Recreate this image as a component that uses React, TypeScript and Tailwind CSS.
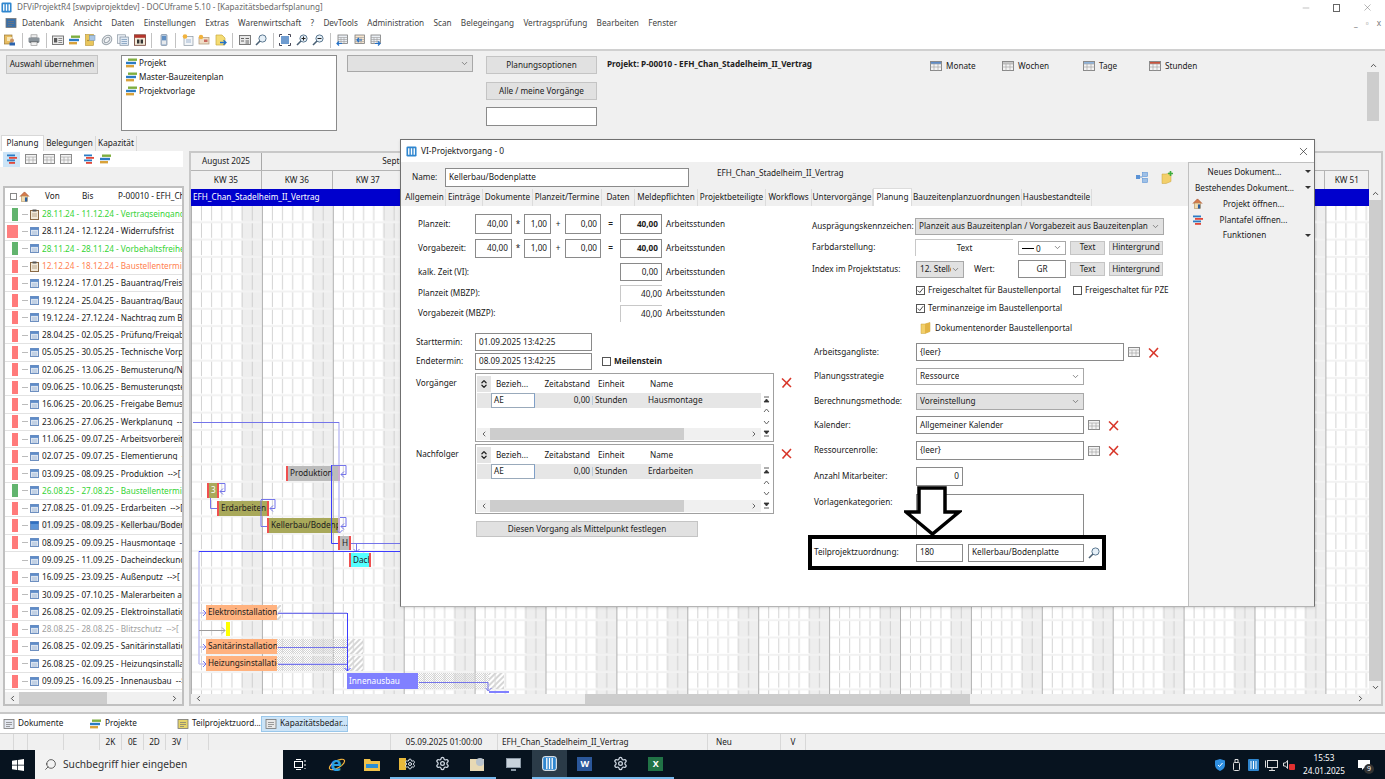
import React from 'react';
import { ChevronDown, ChevronLeft, ChevronRight, ChevronUp, Settings, Search, Minus, X, ChevronsUpDown } from 'lucide-react';

// small toolbar / tree glyphs
const CalIcon = ({ dark }: { dark?: boolean }) => (
  <svg width="9" height="9" viewBox="0 0 9 9" className="shrink-0">
    <rect x="0.5" y="0.5" width="8" height="8" fill={dark ? '#5b93d6' : '#dbe4f0'} stroke="#6d8fc0" />
    <rect x="0.5" y="0.5" width="8" height="2.4" fill={dark ? '#2f6fc0' : '#5f8cc8'} />
    {!dark && <path d="M2 5h5M2 7h5" stroke="#9db3d2" strokeWidth="0.8" />}
  </svg>
);

const ClipIcon = () => (
  <svg width="9" height="11" viewBox="0 0 9 11" className="shrink-0">
    <rect x="0.5" y="1.5" width="8" height="9" fill="#f3ead9" stroke="#8a6a45" />
    <rect x="2.5" y="0.5" width="4" height="2" fill="#555" />
    <path d="M2 5h5M2 7h5" stroke="#a08a6a" strokeWidth="0.7" />
  </svg>
);

const BarsIcon = () => (
  <svg width="11" height="10" viewBox="0 0 11 10" className="shrink-0">
    <rect x="2" y="0.5" width="9" height="2.4" fill="#7fae3f" />
    <rect x="0" y="3.8" width="10" height="2.4" fill="#2b7bc4" />
    <rect x="0" y="7" width="8" height="2.4" fill="#d9a23a" />
  </svg>
);

const RedBars = () => (
  <svg width="11" height="10" viewBox="0 0 11 10" className="shrink-0">
    <rect x="1" y="0.5" width="8" height="1.8" fill="#2b7bc4" />
    <rect x="3" y="3" width="8" height="1.8" fill="#e0483a" />
    <rect x="1" y="5.5" width="8" height="1.8" fill="#2b7bc4" />
    <rect x="3" y="8" width="6" height="1.8" fill="#e0483a" />
  </svg>
);

const House = ({ size = 11 }: { size?: number }) => (
  <svg width={size} height={size} viewBox="0 0 12 12" className="shrink-0">
    <path d="M1 6l5-5 5 5" fill="#d67a4a" stroke="#a8502a" strokeWidth="0.8" />
    <rect x="2.5" y="5.5" width="7" height="6" fill="#f2dcb0" stroke="#a88a5a" strokeWidth="0.6" />
    <rect x="6.5" y="7" width="2.5" height="4.5" fill="#2c5f9e" />
  </svg>
);

const AppLogo = ({ size = 12 }: { size?: number }) => (
  <svg width={size} height={size} viewBox="0 0 12 12" className="shrink-0">
    <rect x="0.5" y="0.5" width="11" height="11" rx="1.5" fill="#2f86cf" />
    <path d="M3 2.5v7M6 2.5v7M9 2.5v7" stroke="#fff" strokeWidth="1.5" />
  </svg>
);

const RedX = () => (
  <svg width="11" height="11" viewBox="0 0 11 11" className="shrink-0">
    <path d="M1 1.5l9 8.5M10 1l-8.5 9.5" stroke="#d8372a" strokeWidth="1.6" />
  </svg>
);

const TableIcon = ({ head = '#f4f4f4' }: { head?: string }) => (
  <svg width="12" height="10" viewBox="0 0 12 10" className="shrink-0">
    <rect x="0.5" y="0.5" width="11" height="9" fill="#f4f4f4" stroke="#8a8a8a" />
    <rect x="1" y="1" width="10" height="2" fill={head} />
    <path d="M0.5 3h11M0.5 6h11M4 3v6.5M8 3v6.5" stroke="#a8a8a8" strokeWidth="0.7" />
  </svg>
);

const Magnifier = ({ plus, minus }: { plus?: boolean; minus?: boolean }) => (
  <svg width="12" height="12" viewBox="0 0 12 12" className="shrink-0">
    <circle cx="7.5" cy="4.5" r="3.6" fill="#e6f0f8" stroke="#5b7890" />
    <path d="M5 7l-4 4" stroke="#4a6074" strokeWidth="1.6" />
    {plus && <path d="M5.5 4.5h4M7.5 2.5v4" stroke="#222" strokeWidth="1" />}
    {minus && <path d="M5.5 4.5h4" stroke="#222" strokeWidth="1" />}
  </svg>
);

const FolderIcon = () => (
  <svg width="11" height="12" viewBox="0 0 11 12" className="shrink-0">
    <path d="M1 2h4l5-1.5v9L5 11.5H1z" fill="#f2cf6a" stroke="#c9a23f" strokeWidth="0.5" />
    <path d="M5 2l5-1.5v9L5 11.5z" fill="#e2b445" />
  </svg>
);

const TinyDoc = ({ tone }: { tone: string }) => (
  <svg width="12" height="12" viewBox="0 0 12 12" className="shrink-0">
    <rect x="1" y="1.5" width="10" height="9" fill={tone} stroke="#777" strokeWidth="0.8" />
    <path d="M3 4.5h6M3 6.5h6M3 8.5h4" stroke="#777" strokeWidth="0.7" />
  </svg>
);

const Ico = ({ children }: { children: React.ReactNode }) => (
  <svg width="12" height="12" viewBox="0 0 12 12" className="shrink-0">{children}</svg>
);

const CardLines = () => (
  <>
    <rect x="0.5" y="2" width="11" height="8.5" fill="#ececec" stroke="#6e6e6e" strokeWidth="0.9" />
    <rect x="2" y="4" width="3.2" height="4.5" fill="#5a5a5a" />
    <path d="M6.4 4.5h3.8M6.4 6.5h3.8M6.4 8.5h3.8" stroke="#6e6e6e" strokeWidth="0.8" />
  </>
);

const TableBase = ({ tone = '#ecf0f5' }: { tone?: string }) => (
  <>
    <rect x="2" y="1" width="9.5" height="8.5" fill={tone} stroke="#7c7c7c" strokeWidth="0.8" />
    <path d="M2 3.5h9.5M2 5.5h9.5M2 7.5h9.5M5 3.5v6M8 3.5v6" stroke="#9a9a9a" strokeWidth="0.6" />
  </>
);

const Sep = () => <div className="w-px h-[15px] bg-[#c2c2c2] mx-px shrink-0" />;

const ToolBar = () => (
  <div className="h-[20px] bg-white border-b-2 border-[#d0d0d0] flex items-center pl-[4px] gap-[4.5px] shrink-0">
    <Ico>
      <rect x="0.5" y="1" width="7.5" height="9" fill="#e8bd62" stroke="#9c7a34" strokeWidth="0.7" />
      <rect x="3" y="3" width="5" height="4" fill="#f7e7b8" />
      <circle cx="8" cy="6.5" r="2" fill="#c99262" />
      <rect x="5.5" y="8.5" width="5.5" height="3" fill="#2c63ad" />
    </Ico>
    <Sep />
    <Ico>
      <rect x="3" y="0.8" width="6" height="3" fill="#eee" stroke="#888" strokeWidth="0.6" />
      <rect x="0.5" y="3.5" width="11" height="5" rx="1" fill="#8b949b" />
      <rect x="1.5" y="7.5" width="9" height="1.2" fill="#4a5258" />
      <rect x="3" y="8" width="6" height="3.3" fill="#f2f2f2" stroke="#888" strokeWidth="0.6" />
    </Ico>
    <Sep />
    <Ico><CardLines /></Ico>
    <BarsIcon />
    <Ico>
      <rect x="1.5" y="0.5" width="8" height="11" fill="#e9c65c" stroke="#b49334" strokeWidth="0.6" />
      <rect x="5.5" y="1.5" width="5.5" height="5" fill="#a9c5e4" stroke="#6b8db3" strokeWidth="0.5" />
      <circle cx="4" cy="6.5" r="0.7" fill="#8a6a20" />
    </Ico>
    <Ico>
      <ellipse cx="6" cy="6" rx="5.2" ry="4.2" fill="#f1f3f5" stroke="#9aa3ab" transform="rotate(-40 6 6)" />
      <ellipse cx="6" cy="6" rx="3.2" ry="2" fill="none" stroke="#9aa3ab" transform="rotate(-40 6 6)" />
    </Ico>
    <Ico>
      <rect x="0.5" y="0.8" width="8" height="8.5" fill="#edf2f7" stroke="#8a96a2" strokeWidth="0.7" />
      <rect x="3" y="3" width="8.5" height="8.3" fill="#dfe8f2" stroke="#7f8e9e" strokeWidth="0.7" />
      <path d="M4.5 5.5h5.5M4.5 7.5h5.5M4.5 9.5h5.5" stroke="#6f90b5" strokeWidth="0.7" />
    </Ico>
    <Ico>
      <rect x="0.5" y="0.8" width="11" height="10.5" fill="#f3ead8" stroke="#6a3a30" strokeWidth="0.8" />
      <rect x="0.5" y="0.8" width="11" height="3" fill="#b4352c" />
      <rect x="3" y="5.5" width="2.4" height="4" fill="#333" />
      <rect x="6.6" y="5.5" width="2.4" height="4" fill="#333" />
    </Ico>
    <Sep />
    <Ico>
      <rect x="3" y="0.5" width="6" height="11" rx="1" fill="#b5c7db" stroke="#7b8da0" strokeWidth="0.7" />
      <rect x="4" y="2" width="4" height="4" fill="#5f8fc4" />
      <rect x="4" y="7" width="4" height="3" fill="#e6e9ec" />
    </Ico>
    <Sep />
    <Ico>
      <rect x="2" y="2.5" width="9" height="9" fill="#f2f5f8" stroke="#8a96a2" strokeWidth="0.7" />
      <path d="M4 6h5M4 8h5" stroke="#7f9cc0" strokeWidth="0.7" />
      <circle cx="3" cy="2.5" r="2.3" fill="#f2b33d" />
    </Ico>
    <Ico>
      <rect x="1" y="3.5" width="10" height="6.5" fill="#f0ddc6" stroke="#a89274" strokeWidth="0.7" />
      <rect x="6" y="5.5" width="3.5" height="2.5" fill="#c9695c" />
      <circle cx="3" cy="3" r="2.2" fill="#f2b33d" />
    </Ico>
    <Ico>
      <path d="M1 1h6l3 3v7H1z" fill="#f4dc74" stroke="#c9a93c" strokeWidth="0.7" />
      <path d="M5 8.5h5.5M8.5 6.3l2.5 2.2-2.5 2.2" stroke="#2471c8" strokeWidth="1.3" fill="none" />
    </Ico>
    <Sep />
    <Ico><rect x="0.5" y="1.5" width="11" height="9" fill="#e8e8e8" stroke="#6e6e6e" strokeWidth="0.9" /><path d="M2 4.5h3M2 7h3M6.5 4.5h3.5M6.5 7h3.5M6.5 9h3.5" stroke="#555" strokeWidth="0.9" /></Ico>
    <Magnifier />
    <Sep />
    <Ico>
      <rect x="2" y="2" width="8" height="8" fill="#6f9cd0" />
      <path d="M0.5 3V0.5H3M9 0.5h2.5V3M0.5 9v2.5H3M9 11.5h2.5V9" stroke="#334" strokeWidth="0.9" fill="none" />
    </Ico>
    <Magnifier plus />
    <Magnifier minus />
    <Sep />
    <Ico>
      <TableBase />
      <path d="M6 9.5H1M3 7.5l-2 2 2 2" stroke="#2471c8" strokeWidth="1.2" fill="none" />
    </Ico>
    <Ico>
      <TableBase tone="#f7e6d0" />
      <path d="M9 6H4M6 4l-2 2 2 2" stroke="#2471c8" strokeWidth="1.2" fill="none" />
    </Ico>
    <Ico>
      <TableBase />
      <path d="M6 9.5h5M9 7.5l2 2-2 2" stroke="#2471c8" strokeWidth="1.2" fill="none" />
    </Ico>
  </div>
);

const menu = ['Datenbank', 'Ansicht', 'Daten', 'Einstellungen', 'Extras', 'Warenwirtschaft', '?', 'DevTools', 'Administration', 'Scan', 'Belegeingang', 'Vertragsprüfung', 'Bearbeiten', 'Fenster'];

const GrayBtn = ({ children, cls }: { children: React.ReactNode; cls: string }) => (
  <div className={`bg-[#e1e1e1] border border-[#c4c4c4] flex items-center justify-center whitespace-nowrap shrink-0 ${cls}`}>{children}</div>
);

type Row = { text: string; sq: 'r' | 'g' | 'w' | 'n'; color?: string; clip?: boolean; sel?: boolean };
const rows: Row[] = [
  { text: '28.11.24 - 11.12.24 - Vertragseingang/', sq: 'g', color: 'text-[#35d335]', clip: true },
  { text: '28.11.24 - 12.12.24 - Widerrufsfrist', sq: 'w' },
  { text: '28.11.24 - 28.11.24 - Vorbehaltsfreiheit', sq: 'g', color: 'text-[#35d335]' },
  { text: '12.12.24 - 18.12.24 - Baustellentermin', sq: 'r', color: 'text-[#ff7f50]', clip: true },
  { text: '19.12.24 - 17.01.25 - Bauantrag/Freistellung', sq: 'r' },
  { text: '19.12.24 - 25.04.25 - Bauantrag/Baugenehmigung', sq: 'r' },
  { text: '19.12.24 - 27.12.24 - Nachtrag zum Bauantrag', sq: 'r' },
  { text: '28.04.25 - 02.05.25 - Prüfung/Freigabe', sq: 'r' },
  { text: '05.05.25 - 30.05.25 - Technische Vorprüfung', sq: 'r' },
  { text: '02.06.25 - 13.06.25 - Bemusterung/Nachtrag', sq: 'r' },
  { text: '09.06.25 - 10.06.25 - Bemusterungstermin', sq: 'r' },
  { text: '16.06.25 - 20.06.25 - Freigabe Bemusterung', sq: 'r' },
  { text: '23.06.25 - 27.06.25 - Werkplanung  -->[', sq: 'r' },
  { text: '11.06.25 - 09.07.25 - Arbeitsvorbereitung', sq: 'r' },
  { text: '02.07.25 - 09.07.25 - Elementierung  -->[', sq: 'r' },
  { text: '03.09.25 - 08.09.25 - Produktion  -->[', sq: 'r' },
  { text: '26.08.25 - 27.08.25 - Baustellentermin', sq: 'g', color: 'text-[#35d335]' },
  { text: '27.08.25 - 01.09.25 - Erdarbeiten  -->[', sq: 'r' },
  { text: '01.09.25 - 08.09.25 - Kellerbau/Bodenplatte', sq: 'r', sel: true },
  { text: '08.09.25 - 09.09.25 - Hausmontage  -->[', sq: 'r' },
  { text: '09.09.25 - 11.09.25 - Dacheindeckung', sq: 'n' },
  { text: '16.09.25 - 23.09.25 - Außenputz  -->[', sq: 'r' },
  { text: '30.09.25 - 07.10.25 - Malerarbeiten außen', sq: 'r' },
  { text: '26.08.25 - 02.09.25 - Elektroinstallation', sq: 'r' },
  { text: '28.08.25 - 28.08.25 - Blitzschutz  -->[', sq: 'r', color: 'text-[#a0a0a0]' },
  { text: '26.08.25 - 02.09.25 - Sanitärinstallation', sq: 'r' },
  { text: '26.08.25 - 02.09.25 - Heizungsinstallation', sq: 'r' },
  { text: '09.09.25 - 16.09.25 - Innenausbau  -->[', sq: 'r' },
  { text: '', sq: 'r' },
];

const TreeRow = ({ r }: { r: Row }) => (
  <div className="h-[17.3px] shrink-0 flex items-center border-b border-[#e2e2e2] overflow-hidden">
    <div className="w-[13px] h-full flex justify-end items-center shrink-0">
      {r.sq === 'r' && <div className="w-[6px] h-[13px] bg-[#ff7a7a]" />}
      {r.sq === 'g' && <div className="w-[6px] h-[13px] bg-[#62b46e]" />}
      {r.sq === 'w' && <div className="w-[11px] h-[13px] bg-[#ff7f7f]" />}
    </div>
    <div className="w-[6px] h-px bg-[#bbb] ml-[4px] shrink-0" />
    <div className="w-[10px] flex justify-center ml-px shrink-0">{r.clip ? <ClipIcon /> : <CalIcon dark={r.sel} />}</div>
    <div className={`ml-[3px] whitespace-pre overflow-hidden flex-1 ${r.sel ? 'bg-[#f4f4f4]' : ''} ${r.color ?? ''}`}>{r.text}</div>
  </div>
);

const LeftTree = () => (
  <div className="ml-[3px] w-[181px] mt-[19px] h-[520px] bg-white border-2 border-[#c0c0c0] flex flex-col overflow-hidden">
    <div className="h-[18px] shrink-0 flex items-center border-b border-[#e2e2e2]">
      <div className="w-[7px] h-[7px] border border-[#888] ml-[5px] shrink-0" />
      <div className="ml-[2px] shrink-0"><House /></div>
      <div className="ml-[15px] w-[37px] shrink-0">Von</div>
      <div className="w-[36px] shrink-0">Bis</div>
      <div className="whitespace-pre overflow-hidden">P-00010 - EFH_Chan</div>
    </div>
    <div className="flex-1 overflow-hidden">
      {rows.map((r, i) => (
        <TreeRow key={i} r={r} />
      ))}
    </div>
    <div className="h-[12px] bg-[#f0f0f0] shrink-0 flex items-center">
      <ChevronLeft size={9} className="ml-[3px]" />
      <div className="w-[88px] h-full bg-[#cdcdcd] ml-[2px]" />
      <ChevronRight size={9} className="ml-auto mr-[3px]" />
    </div>
  </div>
);

const weeks = [35, 36, 37, 38, 39, 40, 41, 42, 43, 44, 45, 46, 47, 48, 49, 50, 51];

type Bar = { cls: string; label: string; text?: string; ends?: boolean };
const bars: Bar[] = [
  { cls: 'left-[95px] top-[260px] w-[54px] h-[15px] bg-[#bcbcbc]', label: 'Produktion', ends: true },
  { cls: 'left-[16px] top-[277px] w-[12px] h-[15px] bg-[#a9a95a]', label: '3', text: 'text-white', ends: true },
  { cls: 'left-[26px] top-[295px] w-[52px] h-[15px] bg-[#a9a95a]', label: 'Erdarbeiten', ends: true },
  { cls: 'left-[76px] top-[312px] w-[73px] h-[15px] bg-[#a9a95a]', label: 'Kellerbau/Bodenplatte', ends: true },
  { cls: 'left-[147px] top-[330px] w-[13px] h-[14px] bg-[#bcbcbc]', label: 'H', ends: true },
  { cls: 'left-[158px] top-[347px] w-[22px] h-[14px] bg-[#55ffff]', label: 'Dach', ends: true },
  { cls: 'left-[15px] top-[399px] w-[71px] h-[15px] bg-[#ffb27f]', label: 'Elektroinstallation' },
  { cls: 'left-[35px] top-[416px] w-[4px] h-[14px] bg-[#ffff00]', label: '' },
  { cls: 'left-[15px] top-[433px] w-[71px] h-[15px] bg-[#ffb27f]', label: 'Sanitärinstallation' },
  { cls: 'left-[15px] top-[450px] w-[71px] h-[15px] bg-[#ffb27f]', label: 'Heizungsinstallation' },
  { cls: 'left-[156px] top-[467px] w-[71px] h-[16px] bg-[#8080ff]', label: 'Innenausbau', text: 'text-white' },
  { cls: 'left-[298px] top-[485px] w-[20px] h-[2px] bg-[#8080ff]', label: '' },
];

const GanttGrid = () => (
  <svg className="absolute inset-0" width="1178" height="488" viewBox="190 205 1178 488">
    <defs>
      <pattern id="wk" patternUnits="userSpaceOnUse" x="190" y="205" width="70.9" height="17.3">
        <rect x="50.6" width="20.3" height="17.3" fill="#eeeeee" />
        <rect y="15.3" width="70.9" height="2" fill="#f2f2f2" />
        {[10.13, 20.26, 30.39, 40.52, 50.65, 60.78].map((x) => (
          <rect key={x} x={x} y="0" width="0.8" height="14.5" fill="#c8c8c8" />
        ))}
        <rect x="0" width="0.9" height="17.3" fill="#a8a8a8" />
      </pattern>
      <pattern id="dots" patternUnits="userSpaceOnUse" width="2" height="2">
        <rect width="1" height="1" fill="#d4d4d4" />
        <rect x="1" y="1" width="1" height="1" fill="#d4d4d4" />
      </pattern>
      <pattern id="diag" patternUnits="userSpaceOnUse" width="4" height="4" patternTransform="rotate(45)">
        <rect width="2" height="4" fill="#d6d6d6" />
      </pattern>
    </defs>
    <rect x="190" y="205" width="1178" height="488" fill="#fff" />
    <rect x="190" y="205" width="1178" height="488" fill="url(#wk)" />
    <rect x="276" y="638" width="71" height="15" fill="url(#dots)" />
    <rect x="347" y="638" width="15" height="15" fill="url(#diag)" />
    <rect x="276" y="655" width="71" height="15" fill="url(#dots)" />
    <rect x="347" y="655" width="15" height="15" fill="url(#diag)" />
    <rect x="276" y="604" width="4" height="15" fill="url(#diag)" />
    <rect x="417" y="672" width="71" height="16" fill="url(#dots)" />
    <rect x="488" y="672" width="15" height="16" fill="url(#diag)" />
  </svg>
);

const GanttLines = () => (
  <svg className="absolute inset-0 pointer-events-none" width="1178" height="488" viewBox="190 205 1178 488" fill="none">
    {/* pale links */}
    <g stroke="#c4c4f4" strokeWidth="1.6">
      <path d="M338 421V532" />
      <path d="M198 550V663" />
      <path d="M198 612H205M198 646H205M198 663H205" />
      <path d="M277 612H346M277 663H346" />
    </g>
    {/* dark links */}
    <g stroke="#7474ea" strokeWidth="1">
      <path d="M192 421.5H338" />
      <path d="M330 464.5H345V473.5H340" />
      <path d="M218 482.5H224V490.5H219" />
      <path d="M209.5 497V507.5H216" />
      <path d="M260 498.5H274V507.5H269" />
      <path d="M260 499V525.5H266" />
      <path d="M339 516.5H345V525.5H340" />
      <path d="M277 646.5H346" />
      <path d="M277 612.5H346" />
      <path d="M277 663.5H346" />
      <path d="M418 681.5H487V690" />
      <path d="M350 542.5H400" />
      <path d="M355.5 542V550" />
      <path d="M202 609l3 3-3 3M202 643l3 3-3 3M202 660l3 3-3 3" />
      <path d="M343 470.5l-3 3 3 3M222 487.5l-3 3 3 3M272 504.5l-3 3 3 3M343 522.5l-3 3 3 3" />
      <path d="M352.5 548l3 3 3-3M484.5 687l3 3 3-3M335.5 529l3 3 3-3" />
    </g>
    <g stroke="#3c3cff" strokeWidth="1">
      <path d="M330.5 464V542.5H337" />
      <path d="M198 550.5H400" />
      <path d="M346.5 612V670" />
      <path d="M343.5 667l3 3 3-3" />
    </g>
    <path d="M198 629.5H224M221 626.5l3 3-3 3" stroke="#9c9c9c" />
  </svg>
);

const GanttBars = () => (
  <>
    {bars.map((b) => (
      <div key={b.cls} className={`absolute overflow-hidden whitespace-nowrap flex items-center pl-[2px] ${b.cls} ${b.text ?? ''} ${b.ends ? 'border-x-2 border-[#f05050]' : ''}`}>
        {b.label}
      </div>
    ))}
  </>
);

const Gantt = () => (
  <div className="ml-[5px] w-[1194px] h-[555px] bg-[#f0f0f0] border-2 border-[#c8c8c8] flex flex-col overflow-hidden">
    <div className="flex flex-1 min-h-0">
      <div className="w-[1178px] flex flex-col shrink-0">
        <div className="h-[18px] flex border-b border-[#b4b4b4] shrink-0">
          <div className="w-[71px] flex items-center justify-center border-r border-[#a8a8a8] shrink-0">August 2025</div>
          <div className="w-[304px] flex items-center justify-center shrink-0">September 2025</div>
        </div>
        <div className="h-[18px] flex shrink-0">
          {weeks.map((w) => (
            <div key={w} className={`shrink-0 flex items-center justify-center border-r border-[#b4b4b4] ${w === 51 ? 'w-[44px]' : 'w-[70.9px]'}`}>KW {w}</div>
          ))}
        </div>
        <div className="h-[17px] bg-[#0000cd] text-white flex items-center pl-[2px] shrink-0">EFH_Chan_Stadelheim_II_Vertrag</div>
        <div className="relative h-[488px] shrink-0 overflow-hidden">
          <GanttGrid />
          <GanttBars />
          <GanttLines />
        </div>
      </div>
      <div className="flex-1 flex flex-col items-center pt-[36px] bg-[#f0f0f0]">
        <ChevronUp size={9} />
        <div className="flex-1 w-full bg-[#cdcdcd] my-[2px]" />
        <ChevronDown size={9} />
      </div>
    </div>
    <div className="h-[12px] flex items-center shrink-0">
      <ChevronLeft size={9} className="ml-[3px]" />
      <div className="ml-[382px] w-[385px] h-full bg-[#cdcdcd]" />
      <ChevronRight size={9} className="ml-auto mr-[16px]" />
    </div>
  </div>
);

/* dialog parts */
const Inp = ({ cls, children, right }: { cls: string; children?: React.ReactNode; right?: boolean }) => (
  <div className={`border border-[#8a8a8a] bg-white flex items-center px-[3px] overflow-hidden whitespace-nowrap shrink-0 ${right ? 'justify-end' : ''} ${cls}`}>{children}</div>
);

const Sel = ({ cls, children, gray }: { cls: string; children?: React.ReactNode; gray?: boolean }) => (
  <div className={`border border-[#a8a8a8] flex items-center pl-[3px] pr-[3px] justify-between shrink-0 whitespace-nowrap overflow-hidden ${gray ? 'bg-[#e1e1e1]' : 'bg-white'} ${cls}`}>
    <span className="overflow-hidden">{children}</span>
    <ChevronDown size={9} className="shrink-0 text-[#666]" />
  </div>
);

const TimeRow = ({ label, a, b, c, sum, cls, focus }: { label: string; a: string; b: string; c: string; sum: string; cls: string; focus?: boolean }) => (
  <div className={`flex items-center pl-[17px] ${cls}`}>
    <div className="w-[57px] shrink-0">{label}</div>
    <Inp cls={`w-[37px] h-full ${focus ? 'border-[#5a9bd8] bg-[#f4f4f4]' : ''}`} right>{a}</Inp>
    <div className="w-[12px] text-center shrink-0">*</div>
    <Inp cls="w-[27px] h-full" right>{b}</Inp>
    <div className="w-[14px] text-center shrink-0">+</div>
    <Inp cls="w-[36px] h-full" right>{c}</Inp>
    <div className="w-[19px] text-center font-bold shrink-0">=</div>
    <Inp cls="w-[42px] h-full font-bold" right>{sum}</Inp>
    <div className="ml-[4px]">Arbeitsstunden</div>
  </div>
);

const SumRow = ({ label, val, cls, soft }: { label: string; val: string; cls: string; soft?: boolean }) => (
  <div className={`flex items-center pl-[17px] ${cls}`}>
    <div className="w-[202px] shrink-0">{label}</div>
    {soft ? (
      <div className="w-[42px] h-full border-l border-t border-[#c8c8c8] flex items-center justify-end shrink-0">{val}</div>
    ) : (
      <Inp cls="w-[42px] h-full" right>{val}</Inp>
    )}
    <div className="ml-[4px]">Arbeitsstunden</div>
  </div>
);

const NavIcon = ({ dir }: { dir: string }) => (
  <svg width="7" height="7" viewBox="0 0 7 7" className="shrink-0">
    {dir === 'top' && <path d="M1 1h5M1 6l2.5-3L6 6z" stroke="#333" fill="#333" strokeWidth="0.8" />}
    {dir === 'up' && <path d="M1 5l2.5-3L6 5" stroke="#666" fill="none" />}
    {dir === 'down' && <path d="M1 2l2.5 3L6 2" stroke="#666" fill="none" />}
    {dir === 'bot' && <path d="M1 6h5M1 1l2.5 3L6 1z" stroke="#333" fill="#333" strokeWidth="0.8" />}
  </svg>
);

const LinkGrid = ({ label, name, cls }: { label: string; name: string; cls: string }) => (
  <div className={`flex pl-[15px] ${cls}`}>
    <div className="w-[59px] shrink-0 pt-[6px]">{label}</div>
    <div className="w-[299px] h-full border border-[#a0a0a0] bg-white flex flex-col shrink-0 p-px">
      <div className="h-[18px] flex items-center shrink-0">
        <div className="w-[14px] h-[16px] bg-[#e4e4e4] flex items-center justify-center shrink-0">
          <ChevronsUpDown size={10} strokeWidth={3} />
        </div>
        <div className="w-[43px] pl-[5px] shrink-0">Bezieh...</div>
        <div className="w-[59px] text-right pr-[3px] shrink-0">Zeitabstand</div>
        <div className="w-[52px] pl-[5px] shrink-0">Einheit</div>
        <div className="pl-[5px]">Name</div>
      </div>
      <div className="flex flex-1 min-h-0">
        <div className="w-[284px] flex flex-col shrink-0">
          <div className="h-[15px] bg-[#e6e6e6] flex items-center shrink-0">
            <div className="w-[14px] shrink-0" />
            <div className="w-[44px] h-full bg-white border border-[#9ab] border-r-[#7f9fc8] flex items-center pl-[2px] shrink-0">AE</div>
            <div className="w-[58px] text-right pr-[2px] shrink-0 border-r border-[#b8cce0]">0,00</div>
            <div className="w-[52px] pl-[2px] shrink-0">Stunden</div>
            <div className="pl-[3px]">{name}</div>
          </div>
          <div className="flex-1" />
          <div className="h-[12px] bg-[#f0f0f0] flex items-center shrink-0">
            <ChevronLeft size={8} className="ml-[3px] shrink-0" />
            <div className="w-[194px] h-full bg-[#cdcdcd] ml-[2px]" />
            <ChevronRight size={8} className="ml-auto mr-[3px] shrink-0" />
          </div>
        </div>
        <div className="flex-1 flex flex-col items-center justify-between py-[3px]">
          <NavIcon dir="top" />
          <NavIcon dir="up" />
          <NavIcon dir="down" />
          <NavIcon dir="bot" />
        </div>
      </div>
    </div>
    <div className="ml-[7px] mt-[4px]"><RedX /></div>
  </div>
);

const ChkBox = ({ on }: { on?: boolean }) => (
  <div className="w-[9px] h-[9px] border border-[#555] bg-white shrink-0 flex items-center justify-center">
    {on && (
      <svg width="7" height="7" viewBox="0 0 7 7">
        <path d="M0.8 3.5l2 2L6.2 1.2" stroke="#333" fill="none" strokeWidth="0.9" />
      </svg>
    )}
  </div>
);

const FieldRow = ({ label, cls, children, pl = 'pl-[14px]' }: { label: string; cls: string; children: React.ReactNode; pl?: string }) => (
  <div className={`flex items-center ${pl} ${cls}`}>
    <div className={`shrink-0 whitespace-nowrap ${pl === 'pl-[14px]' ? 'w-[102px]' : 'w-[103px]'}`}>{label}</div>
    {children}
  </div>
);

const tabsDlg: [string, string][] = [
  ['Allgemein', 'w-[42px]'], ['Einträge', 'w-[37px]'], ['Dokumente', 'w-[50px]'], ['Planzeit/Termine', 'w-[69px]'],
  ['Daten', 'w-[33px]'], ['Meldepflichten', 'w-[63px]'], ['Projektbeteiligte', 'w-[68px]'], ['Workflows', 'w-[46px]'],
  ['Untervorgänge', 'w-[61px]'],
];

const SideItem = ({ label, arrow, icon }: { label: string; arrow?: boolean; icon?: React.ReactNode }) => (
  <div className={`h-[15.9px] flex items-center relative justify-center ${icon ? 'pl-[4px]' : 'pr-[14px]'}`}>
    {icon && <div className="absolute left-[3px]">{icon}</div>}
    <span>{label}</span>
    {arrow && <div className="absolute right-[3px] w-0 h-0 border-x-[3px] border-x-transparent border-t-[3px] border-t-[#333]" />}
  </div>
);

const Dialog = () => (
  <div className="absolute left-[400px] top-[139px] w-[915px] h-[468px] bg-white border border-[#707070] border-b-[#b4b4b4] shadow-sm flex flex-col">
    <div className="h-[22px] flex items-center pl-[5px] shrink-0 text-[8.4px]">
      <AppLogo size={11} />
      <span className="ml-[4px]">VI-Projektvorgang - 0</span>
      <X size={13} strokeWidth={1.2} className="ml-auto mr-[4px]" />
    </div>
    <div className="flex flex-1 min-h-0">
      <div className="w-[787px] flex flex-col shrink-0">
        <div className="h-[44px] bg-[#f0f0f0] flex flex-col shrink-0">
          <div className="h-[26px] flex items-center pl-[11px] pt-[5px] shrink-0">
            <div className="w-[33px] shrink-0">Name:</div>
            <Inp cls="w-[244px] h-[19px]">Kellerbau/Bodenplatte</Inp>
            <div className="ml-[28px] mb-[8px]">EFH_Chan_Stadelheim_II_Vertrag</div>
            <div className="ml-auto mr-[15px] flex gap-[13px] items-center">
              <svg width="12" height="11" viewBox="0 0 12 11" className="shrink-0">
                <rect x="0" y="3" width="4" height="4" fill="#5b93d6" />
                <rect x="6.5" y="0.5" width="5" height="4" fill="#9ec0e6" stroke="#5b93d6" strokeWidth="0.6" />
                <rect x="6.5" y="6.5" width="5" height="4" fill="#9ec0e6" stroke="#5b93d6" strokeWidth="0.6" />
                <path d="M4 5h2.5" stroke="#5b93d6" />
              </svg>
              <svg width="12" height="13" viewBox="0 0 12 13" className="shrink-0">
                <path d="M1 3h4l5-1.5v9L5 12.5H1z" fill="#f2cf6a" stroke="#c9a23f" strokeWidth="0.5" />
                <path d="M9.5 0v5M7 2.5h5" stroke="#3fae3f" strokeWidth="1.6" />
              </svg>
            </div>
          </div>
          <div className="h-[18px] flex items-end pl-[3px] shrink-0">
            {tabsDlg.map(([t, w]) => (
              <div key={t} className={`h-[17px] border-r border-[#dcdcdc] flex items-center justify-center whitespace-nowrap shrink-0 ${w}`}>{t}</div>
            ))}
            <div className="w-[39px] h-[18px] bg-white border-x border-t border-[#dcdcdc] flex items-center justify-center shrink-0">Planung</div>
            <div className="w-[110px] h-[17px] border-r border-[#dcdcdc] flex items-center justify-center whitespace-nowrap shrink-0">Bauzeitenplanzuordnungen</div>
            <div className="w-[70px] h-[17px] border-r border-[#dcdcdc] flex items-center justify-center whitespace-nowrap shrink-0">Hausbestandteile</div>
          </div>
        </div>
        <div className="flex-1 flex min-h-0 bg-white">
          {/* left form */}
          <div className="w-[399px] shrink-0 flex flex-col">
            <TimeRow label="Planzeit:" a="40,00" b="1,00" c="0,00" sum="40,00" cls="mt-[8px] h-[20px]" focus />
            <TimeRow label="Vorgabezeit:" a="40,00" b="1,00" c="0,00" sum="40,00" cls="mt-[5px] h-[19px]" />
            <SumRow label="kalk. Zeit (VI):" val="0,00" cls="mt-[5px] h-[18px]" />
            <SumRow label="Planzeit (MBZP):" val="40,00" cls="mt-[4px] h-[17px]" soft />
            <SumRow label="Vorgabezeit (MBZP):" val="40,00" cls="mt-[3px] h-[17px]" soft />
            <div className="flex items-center pl-[15px] mt-[11px] h-[18px]">
              <div className="w-[59px] shrink-0">Starttermin:</div>
              <Inp cls="w-[117px] h-full">01.09.2025 13:42:25</Inp>
            </div>
            <div className="flex items-center pl-[15px] mt-[2px] h-[17px]">
              <div className="w-[59px] shrink-0">Endetermin:</div>
              <Inp cls="w-[117px] h-full">08.09.2025 13:42:25</Inp>
              <div className="ml-[10px]"><ChkBox /></div>
              <div className="ml-[3px] font-bold">Meilenstein</div>
            </div>
            <LinkGrid label="Vorgänger" name="Hausmontage" cls="mt-[3px] h-[69px]" />
            <LinkGrid label="Nachfolger" name="Erdarbeiten" cls="mt-[2px] h-[70px]" />
            <div className="pl-[75px] mt-[7px]">
              <GrayBtn cls="w-[222px] h-[16px]">Diesen Vorgang als Mittelpunkt festlegen</GrayBtn>
            </div>
          </div>
          {/* right form */}
          <div className="flex-1 flex flex-col relative">
            <FieldRow label="Ausprägungskennzeichen:" pl="pl-[12px]" cls="mt-[12px] h-[17px]">
              <Sel cls="w-[249px] h-full" gray>Planzeit aus Bauzeitenplan / Vorgabezeit aus Bauzeitenplan</Sel>
            </FieldRow>
            <FieldRow label="Farbdarstellung:" pl="pl-[12px]" cls="mt-[4px] h-[17px]">
              <div className="w-[98px] h-full border-l border-t border-[#c8c8c8] flex items-center justify-center shrink-0">Text</div>
              <Sel cls="w-[48px] h-[14px] ml-[5px]">
                <span className="inline-flex items-center gap-[2px]"><span className="w-[12px] h-px bg-black" />0</span>
              </Sel>
              <GrayBtn cls="w-[35px] h-[14px] ml-[4px]">Text</GrayBtn>
              <GrayBtn cls="w-[54px] h-[14px] ml-[4px]">Hintergrund</GrayBtn>
            </FieldRow>
            <FieldRow label="Index im Projektstatus:" pl="pl-[12px]" cls="mt-[4px] h-[18px]">
              <Sel cls="w-[48px] h-[17px] ml-px" gray>12. Stelle</Sel>
              <div className="w-[54px] pl-[10px] shrink-0">Wert:</div>
              <Inp cls="w-[48px] h-full justify-center">GR</Inp>
              <GrayBtn cls="w-[35px] h-[14px] ml-[4px]">Text</GrayBtn>
              <GrayBtn cls="w-[54px] h-[14px] ml-[4px]">Hintergrund</GrayBtn>
            </FieldRow>
            <div className="mt-[4px] h-[16px] pl-[116px] flex items-center">
              <ChkBox on />
              <div className="ml-[3px] w-[145px] shrink-0">Freigeschaltet für Baustellenportal</div>
              <ChkBox />
              <div className="ml-[3px] whitespace-nowrap">Freigeschaltet für PZE</div>
            </div>
            <div className="mt-[2px] h-[16px] pl-[116px] flex items-center">
              <ChkBox on />
              <div className="ml-[3px]">Terminanzeige im Baustellenportal</div>
            </div>
            <div className="mt-[4px] h-[16px] pl-[120px] flex items-center">
              <FolderIcon />
              <div className="ml-[4px]">Dokumentenorder Baustellenportal</div>
            </div>
            <FieldRow label="Arbeitsgangliste:" cls="mt-[7px] h-[18px]">
              <Inp cls="w-[208px] h-full">{'{leer}'}</Inp>
              <div className="ml-[4px]"><TableIcon /></div>
              <div className="ml-[8px]"><RedX /></div>
            </FieldRow>
            <FieldRow label="Planungsstrategie" cls="mt-[7px] h-[17px]">
              <Sel cls="w-[168px] h-full">Ressource</Sel>
            </FieldRow>
            <FieldRow label="Berechnungsmethode:" cls="mt-[8px] h-[17px]">
              <Sel cls="w-[168px] h-full" gray>Voreinstellung</Sel>
            </FieldRow>
            <FieldRow label="Kalender:" cls="mt-[6px] h-[18px]">
              <Inp cls="w-[168px] h-full">Allgemeiner Kalender</Inp>
              <div className="ml-[4px]"><TableIcon /></div>
              <div className="ml-[8px]"><RedX /></div>
            </FieldRow>
            <FieldRow label="Ressourcenrolle:" cls="mt-[7px] h-[19px]">
              <Inp cls="w-[168px] h-full">{'{leer}'}</Inp>
              <div className="ml-[4px]"><TableIcon /></div>
              <div className="ml-[8px]"><RedX /></div>
            </FieldRow>
            <FieldRow label="Anzahl Mitarbeiter:" cls="mt-[7px] h-[19px]">
              <Inp cls="w-[47px] h-full" right>0</Inp>
            </FieldRow>
            <div className="flex pl-[14px] mt-[8px] h-[41px]">
              <div className="w-[102px] pt-[4px] shrink-0">Vorlagenkategorien:</div>
              <div className="w-[168px] h-full border border-[#8a8a8a] border-b-0" />
            </div>
            <div className="ml-[8px] w-[298px] h-[35px] border-4 border-black bg-white flex items-center pl-[2px]">
              <div className="w-[102px] shrink-0">Teilprojektzuordnung:</div>
              <Inp cls="w-[47px] h-[18px]">180</Inp>
              <Inp cls="w-[116px] h-[18px] ml-[5px]">Kellerbau/Bodenplatte</Inp>
              <div className="ml-[4px]"><Magnifier /></div>
            </div>
            <svg className="absolute left-[104px] top-[280px]" width="58" height="50" viewBox="0 0 58 50">
              <path d="M15 2H41V26H55L28.5 48L2 26H15Z" fill="#fff" stroke="#000" strokeWidth="3.5" strokeLinejoin="miter" />
            </svg>
          </div>
        </div>
      </div>
      <div className="flex-1 bg-[#f0f0f0] border-l border-t border-[#c0c0c0] pt-[1px]">
        <SideItem label="Neues Dokument..." arrow />
        <SideItem label="Bestehendes Dokument..." arrow />
        <SideItem label="Projekt öffnen..." icon={<House />} />
        <SideItem label="Plantafel öffnen..." icon={<RedBars />} />
        <SideItem label="Funktionen" arrow />
      </div>
    </div>
  </div>
);

const viewBtns: [string, string, string][] = [
  ['Monate', 'w-[72px]', '#5f8cc8'],
  ['Wochen', 'w-[81px]', '#c8c8c8'],
  ['Tage', 'w-[66px]', '#8fb4dc'],
  ['Stunden', 'w-[70px]', '#c9533c'],
];

const TaskIcon = ({ children, cls = '' }: { children?: React.ReactNode; cls?: string }) => (
  <div className={`w-[35.5px] h-full flex items-center justify-center shrink-0 relative ${cls}`}>{children}</div>
);

export default function App() {
  return (
    <div className="relative w-[1385px] h-[779px] overflow-hidden bg-[#f0f0f0] flex flex-col font-['Noto_Sans',sans-serif] text-[8.2px] leading-none text-[#202020]">
      {/* title bar */}
      <div className="h-[15px] bg-white flex items-center pl-[1px] shrink-0 text-[#6a6a6a] text-[8.1px]">
        <AppLogo size={11} />
        <span className="ml-[5px]">DFViProjektR4 [swpviprojektdev] - DOCUframe 5.10 - [Kapazitätsbedarfsplanung]</span>
        <div className="ml-auto flex items-center gap-[22px] mr-[12px] text-[#666]">
          <Minus size={10} strokeWidth={1} />
          <div className="w-[7px] h-[8px] border border-[#666]" />
          <X size={11} strokeWidth={1} />
        </div>
      </div>
      {/* menu */}
      <div className="h-[16px] bg-white flex items-center pl-[5px] shrink-0 text-[#444]">
        <TinyDoc tone="#3a6fa8" />
        <div className="flex ml-[5px] gap-[9.3px]">
          {menu.map((m) => (
            <span key={m}>{m}</span>
          ))}
        </div>
        <div className="ml-auto mr-[4px] flex gap-[8px] text-[#777]"><span>_</span><span>▫</span><span>x</span></div>
      </div>
      <ToolBar />
      {/* top panel */}
      <div className="h-[84px] flex pt-[4px] pl-[6px] shrink-0">
        <GrayBtn cls="w-[92px] h-[19px]">Auswahl übernehmen</GrayBtn>
        <div className="ml-[23px] w-[216px] h-[76px] bg-white border border-[#8a8a8a] pl-[4px] pt-[2px] flex flex-col gap-[4px] shrink-0">
          {['Projekt', 'Master-Bauzeitenplan', 'Projektvorlage'].map((t) => (
            <div key={t} className="h-[10px] flex items-center gap-[2px]"><BarsIcon /><span>{t}</span></div>
          ))}
        </div>
        <Sel cls="ml-[10px] w-[126px] h-[17px]" gray />
        <div className="ml-[13px] w-[111px] flex flex-col shrink-0">
          <GrayBtn cls="w-full h-[18px] mt-[1px]">Planungsoptionen</GrayBtn>
          <GrayBtn cls="w-full h-[18px] mt-[8px]">Alle / meine Vorgänge</GrayBtn>
          <Inp cls="w-full h-[19px] mt-[7px]" />
        </div>
        <div className="ml-[10px] w-[323px] font-bold pt-[5px] shrink-0">Projekt: P-00010 - EFH_Chan_Stadelheim_II_Vertrag</div>
        <div className="flex items-start pt-[6px]">
          {viewBtns.map(([t, w, h]) => (
            <div key={t} className={`flex items-center gap-[4px] shrink-0 ${w}`}><TableIcon head={h} /><span>{t}</span></div>
          ))}
        </div>
        <div className="ml-auto mr-[6px] w-[12px] flex flex-col items-center">
          <ChevronUp size={9} className="mt-[6px]" />
          <div className="w-full h-[49px] bg-[#cdcdcd] mt-[2px]" />
        </div>
      </div>
      {/* tabs */}
      <div className="h-[16px] flex items-end pl-[1px] shrink-0">
        <div className="w-[43px] h-[16px] bg-white border-x border-t border-[#d8d8d8] flex items-center justify-center">Planung</div>
        <div className="w-[52px] h-[15px] border-r border-[#d8d8d8] flex items-center justify-center">Belegungen</div>
        <div className="w-[41px] h-[15px] border-r border-[#d8d8d8] flex items-center justify-center">Kapazität</div>
      </div>
      {/* body */}
      <div className="flex-1 min-h-0 flex border-b-2 border-[#c8c8c8]">
        <div className="w-[184px] flex flex-col shrink-0">
          <div className="h-[16px] -mb-[16px] flex items-center pl-[3px] gap-[5px] bg-white w-[183px]">
            <div className="w-[17px] h-[15px] bg-[#cce4f7] flex items-center justify-center shrink-0"><RedBars /></div>
            <TableIcon />
            <div className="ml-[1px]"><TableIcon /></div>
            <TableIcon />
            <div className="ml-[6px]"><RedBars /></div>
            <div className="ml-[1px]"><BarsIcon /></div>
          </div>
          <div className="pt-[16px]"><LeftTree /></div>
        </div>
        <Gantt />
      </div>
      {/* doc tabs */}
      <div className="h-[20px] bg-white flex items-center shrink-0 border-b border-[#d0d0d0]">
        <div className="w-[90px] pl-[3px] flex items-center gap-[3px] shrink-0"><TinyDoc tone="#e4e8f0" /><span>Dokumente</span></div>
        <div className="w-[87px] flex items-center gap-[4px] shrink-0"><BarsIcon /><span>Projekte</span></div>
        <div className="w-[84px] flex items-center gap-[3px] shrink-0"><TinyDoc tone="#e6d46a" /><span className="whitespace-nowrap">Teilprojektzuord...</span></div>
        <div className="w-[87px] h-[16px] bg-[#cce4f7] border border-[#9ac7ea] flex items-center gap-[3px] pl-[3px] shrink-0"><TinyDoc tone="#e8e8e8" /><span className="whitespace-nowrap">Kapazitätsbedar...</span></div>
      </div>
      {/* status */}
      <div className="h-[16px] flex items-center shrink-0">
        <div className="w-[14px] h-full border-r border-[#d8d8d8]" />
        <div className="w-[14px] h-full border-r border-[#d8d8d8]" />
        <div className="w-[36px] h-full border-r border-[#d8d8d8]" />
        <div className="w-[36px] h-full border-r border-[#d8d8d8]" />
        {['2K', '0E', '2D', '3V'].map((s) => (
          <div key={s} className="w-[22px] h-full border-r border-[#d8d8d8] flex items-center justify-center">{s}</div>
        ))}
        <div className="w-[21px] h-full border-r border-[#d8d8d8]" />
        <div className="w-[182px] h-full border-r border-[#d8d8d8]" />
        <div className="w-[107px] h-full border-r border-[#d8d8d8] flex items-center justify-center">05.09.2025 01:00:00</div>
        <div className="w-[210px] h-full border-r border-[#d8d8d8] flex items-center pl-[4px]">EFH_Chan_Stadelheim_II_Vertrag</div>
        <div className="w-[73px] h-full border-r border-[#d8d8d8] flex items-center pl-[8px]">Neu</div>
        <div className="w-[25px] h-full border-r border-[#d8d8d8] flex items-center justify-center">V</div>
      </div>
      {/* taskbar */}
      <div className="h-[29px] bg-[#07131f] flex items-center shrink-0 text-white">
        <div className="w-[35px] h-full flex items-center justify-center shrink-0">
          <svg width="12" height="12" viewBox="0 0 12 12"><path d="M0 1.8l5-.7v4.6H0zM5.8 1l6.2-.9v5.6H5.8zM0 6.4h5v4.5l-5-.7zM5.8 6.4H12V12l-6.2-.9z" fill="#fff" /></svg>
        </div>
        <div className="w-[248px] h-full bg-[#f2f2f2] flex items-center pl-[9px] text-[#333] text-[10.2px] shrink-0">
          <Search size={13} strokeWidth={1.4} className="scale-x-[-1]" />
          <span className="ml-[6px]">Suchbegriff hier eingeben</span>
        </div>
        <TaskIcon>
          <svg width="13" height="11" viewBox="0 0 13 11" fill="none" stroke="#fff"><rect x="0.5" y="2.5" width="8" height="6" /><path d="M2 0.5h5M2 10.5h5M11 1v2M11 5v2M11 9v1" /></svg>
        </TaskIcon>
        <TaskIcon>
          <svg className="absolute left-[9px] top-[6px]" width="18" height="17" viewBox="0 0 18 17" fill="none"><ellipse cx="9" cy="8.5" rx="8.5" ry="3.5" stroke="#f2b33d" strokeWidth="1.2" transform="rotate(-30 9 8.5)" /></svg>
          <span className="relative text-[19px] font-bold text-[#2a9fe0]">e</span>
        </TaskIcon>
        <TaskIcon>
          <svg width="16" height="13" viewBox="0 0 16 13"><path d="M0 1h6l1 2h9v10H0z" fill="#f0c24a" /><rect x="2" y="6" width="12" height="4" fill="#2b8fd6" /></svg>
        </TaskIcon>
        <TaskIcon cls="border-b-2 border-[#76b9ed]">
          <svg width="7" height="12" viewBox="0 0 7 12" className="mr-[-2px]"><rect width="7" height="12" fill="#e8b93a" /></svg>
          <Settings size={12} className="text-[#dfe6ee]" />
        </TaskIcon>
        <TaskIcon cls="border-b-2 border-[#76b9ed]"><Settings size={15} className="text-[#cfd8e2]" /></TaskIcon>
        <TaskIcon cls="border-b-2 border-[#76b9ed]">
          <svg width="16" height="14" viewBox="0 0 16 14"><rect width="14" height="12" y="2" fill="#e8d9b4" /><circle cx="10" cy="5" r="4" fill="#b8c2cc" /></svg>
        </TaskIcon>
        <TaskIcon>
          <svg width="15" height="13" viewBox="0 0 15 13"><rect x="0.5" y="0.5" width="14" height="9" fill="#c9d3dc" stroke="#8b98a5" /><path d="M5 12h5" stroke="#8b98a5" strokeWidth="2" /></svg>
        </TaskIcon>
        <TaskIcon cls="bg-[#2b3b48] border-b-2 border-[#76b9ed]">
          <svg width="15" height="15" viewBox="0 0 15 15"><rect x="0.7" y="0.7" width="13.6" height="13.6" rx="2" fill="#2f86cf" stroke="#fff" strokeWidth="1" /><path d="M4.8 2v11M7.5 2v11M10.2 2v11" stroke="#fff" strokeWidth="1.3" /></svg>
        </TaskIcon>
        <TaskIcon cls="border-b-2 border-[#76b9ed]">
          <div className="w-[15px] h-[14px] bg-[#2b579a] flex items-center justify-center font-bold text-[9px]">W</div>
        </TaskIcon>
        <TaskIcon cls="border-b-2 border-[#76b9ed]"><Settings size={15} className="text-[#cfd8e2]" /></TaskIcon>
        <TaskIcon cls="border-b-2 border-[#76b9ed]">
          <div className="w-[15px] h-[14px] bg-[#217346] flex items-center justify-center font-bold text-[9px]">X</div>
        </TaskIcon>
        <div className="ml-auto flex items-center h-full pr-[15px]">
          <svg width="10" height="12" viewBox="0 0 10 12"><path d="M5 0l5 1.5V6c0 3-2.5 5-5 6-2.5-1-5-3-5-6V1.5z" fill="#2f8fe0" /><path d="M3 6l1.5 1.5L7.5 4" stroke="#fff" fill="none" /></svg>
          <svg width="8" height="12" viewBox="0 0 8 12" className="ml-[8px]" fill="none" stroke="#ddd"><rect x="0.5" y="3.5" width="6" height="8" rx="1" /><path d="M2 3.5V0.5h3v3" /></svg>
          <svg width="11" height="12" viewBox="0 0 11 12" className="ml-[7px]"><rect width="11" height="12" rx="1" fill="#2f86cf" /><path d="M3 2v8M5.5 2v8M8 2v8" stroke="#fff" /></svg>
          <svg width="13" height="12" viewBox="0 0 13 12" className="ml-[6px]" fill="none" stroke="#ddd"><rect x="2.5" y="1.5" width="10" height="7" /><path d="M7 8.5v3M4 11.5h6M0.5 1.5v7" /></svg>
          <svg width="12" height="11" viewBox="0 0 12 11" className="ml-[5px]"><path d="M0.5 4h2l2-2.5v8L2.5 7h-2z" fill="none" stroke="#ddd" /><rect x="6" y="5" width="6" height="6" rx="1" fill="#e03030" /></svg>
          <div className="ml-[9px] w-[40px] flex flex-col items-center gap-[5px] text-[8.2px]">
            <span>15:53</span>
            <span>24.01.2025</span>
          </div>
          <div className="ml-[14px] relative">
            <svg width="12" height="10" viewBox="0 0 12 10"><path d="M0 0h12v8H6L4 10V8H0z" fill="#fff" /></svg>
            <div className="absolute left-[6px] top-[4px] w-[10px] h-[10px] rounded-full bg-[#333] text-[7px] flex items-center justify-center">9</div>
          </div>
        </div>
      </div>
      <Dialog />
    </div>
  );
}
